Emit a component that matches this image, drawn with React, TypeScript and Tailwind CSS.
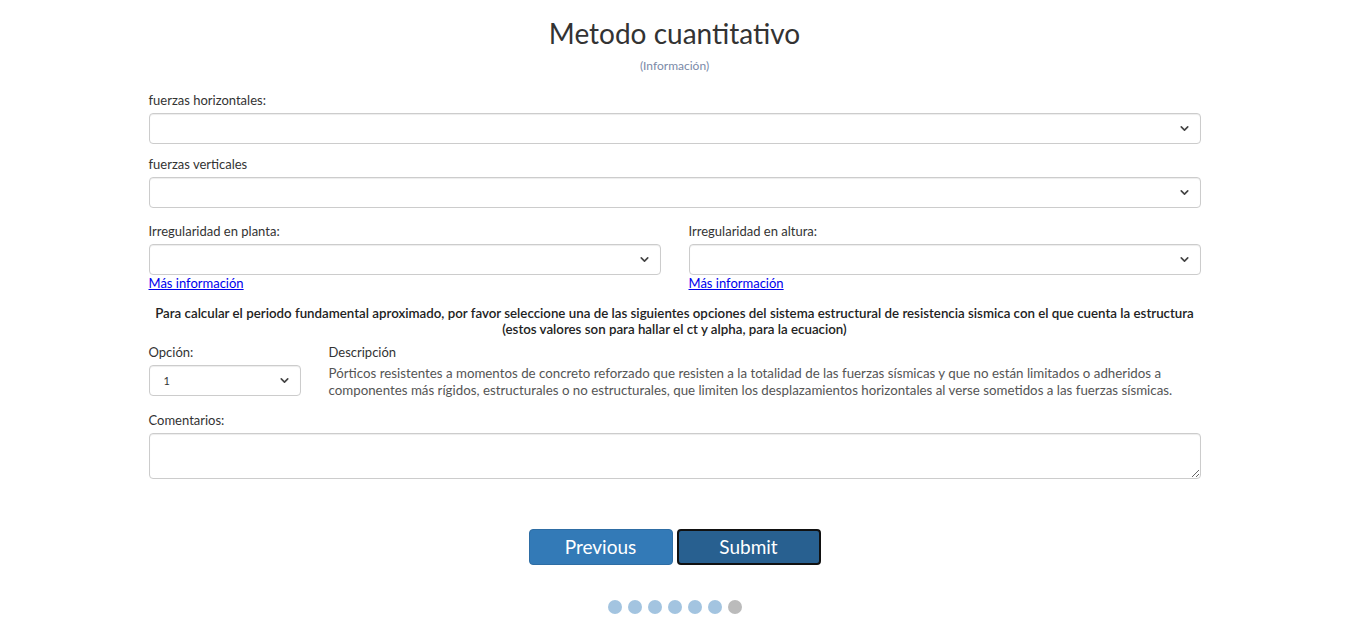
import { ChevronDown } from 'lucide-react';

function Select({ className = '', value = '' }: { className?: string; value?: string }) {
  return (
    <div
      className={`relative h-[31px] rounded-[4px] border border-[#cccccc] bg-white shadow-[inset_0_1px_1px_rgba(0,0,0,0.075)] ${className}`}
    >
      {value && <span className="absolute left-[14px] top-[7px] text-[11px] text-[#333]">{value}</span>}
      <ChevronDown size={13} strokeWidth={3} className="absolute right-[9px] top-[8px] text-[#444]" />
    </div>
  );
}

function Label({ children }: { children: React.ReactNode }) {
  return <div className="text-[13px] leading-[18px] text-[#333] mb-[4px]">{children}</div>;
}

export default function App() {
  return (
    <div className="min-h-[620px] bg-white font-['Lato',sans-serif] text-[#333]">
      <div className="mx-auto w-[1052px] pt-[16px]">
        <h1 className="text-center text-[28px] leading-[34px] text-[#333]">Metodo cuantitativo</h1>
        <p className="mt-[7px] text-center text-[12px] leading-[17px] text-[#7b8aa8]">(Información)</p>

        <div className="mt-[17px]">
          <Label>fuerzas horizontales:</Label>
          <Select />
        </div>
        <div className="mt-[11px]">
          <Label>fuerzas verticales</Label>
          <Select />
        </div>

        <div className="mt-[14px] grid grid-cols-2 gap-[28px]">
          <div>
            <Label>Irregularidad en planta:</Label>
            <Select />
            <a href="#" className="block text-[13px] leading-[16px] text-[#0000ee] underline">Más información</a>
          </div>
          <div>
            <Label>Irregularidad en altura:</Label>
            <Select />
            <a href="#" className="block text-[13px] leading-[16px] text-[#0000ee] underline">Más información</a>
          </div>
        </div>

        <p className="mt-[14px] text-center text-[13.3px] font-semibold leading-[16px] text-[#222]">
          Para calcular el periodo fundamental aproximado, por favor seleccione una de las siguientes opciones del sistema estructural de resistencia sismica con el que cuenta la estructura
          <br />
          (estos valores son para hallar el ct y alpha, para la ecuacion)
        </p>

        <div className="mt-[6px] flex gap-[28px]">
          <div className="w-[152px]">
            <Label>Opción:</Label>
            <Select value="1" />
          </div>
          <div className="flex-1">
            <Label>Descripción</Label>
            <p className="text-[13.3px] leading-[17px] text-[#555]">
              Pórticos resistentes a momentos de concreto reforzado que resisten a la totalidad de las fuerzas sísmicas y que no están limitados o adheridos a componentes más rígidos, estructurales o no estructurales, que limiten los desplazamientos horizontales al verse sometidos a las fuerzas sísmicas.
            </p>
          </div>
        </div>

        <div className="mt-[12px]">
          <Label>Comentarios:</Label>
          <textarea className="block h-[46px] w-full rounded-[4px] border border-[#cccccc] shadow-[inset_0_1px_1px_rgba(0,0,0,0.075)]" />
        </div>

        <div className="mt-[50px] flex justify-center gap-[4px]">
          <button className="h-[36px] w-[144px] rounded-[4px] border border-[#2e6da4] bg-[#337ab7] text-[19px] text-white">
            Previous
          </button>
          <button className="h-[36px] w-[144px] rounded-[4px] border-2 border-[#111] bg-[#286090] text-[19px] text-white">
            Submit
          </button>
        </div>

        <div className="mt-[35px] flex justify-center gap-[6px]">
          {[0, 1, 2, 3, 4, 5].map((i) => (
            <span key={i} className="h-[14px] w-[14px] rounded-full bg-[#a3c4e0]" />
          ))}
          <span className="h-[14px] w-[14px] rounded-full bg-[#bbbbbb]" />
        </div>
      </div>
    </div>
  );
}
